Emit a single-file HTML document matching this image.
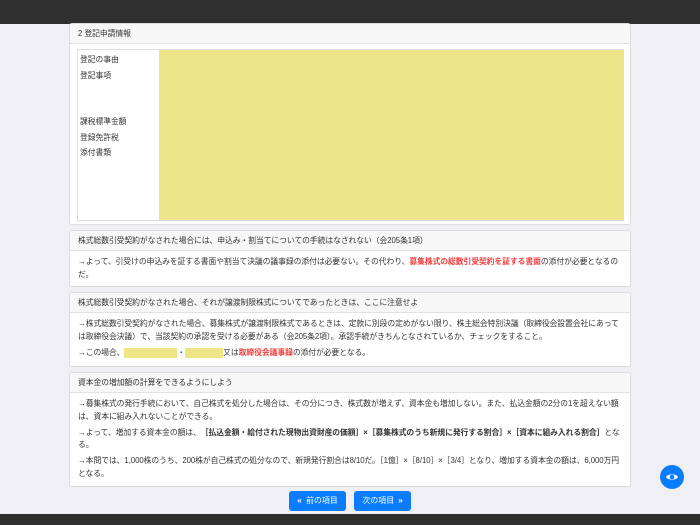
<!DOCTYPE html>
<html><head><meta charset="utf-8"><style>
*{box-sizing:border-box;margin:0;padding:0}
body{width:700px;height:525px;overflow:hidden;background:#efeff4;font-family:"Liberation Sans","Noto Sans CJK JP",sans-serif;font-size:7.8px;letter-spacing:-0.06px;color:#333;position:relative}
.top{position:absolute;left:0;top:0;width:700px;height:24px;background:#2f2f2f}
.bot{position:absolute;left:0;top:514px;width:700px;height:11px;background:#2f2f2f}
.card{position:absolute;left:69px;width:562px;background:#fff;border:1px solid #ddd;border-radius:3px;overflow:hidden}
.hd{background:#f7f7f7;border-bottom:1px solid #e2e2e2;height:20px;line-height:19px;padding-left:8px}
.bd{padding:5px 7px 0 8px;line-height:12.6px}
.bd p{margin-bottom:3.5px}
.r{color:#f03c3c;font-weight:bold}
.y{display:inline-block;background:#ede688;height:10px;vertical-align:middle}
.btn{position:absolute;top:491px;height:20px;background:#0a7cff;color:#fff;border-radius:3px;line-height:20px;text-align:center;font-size:8px}
.eye{position:absolute;left:660px;top:465px;width:24px;height:24px;border-radius:50%;background:#0a7cff}
</style></head><body>
<div class="top"></div>
<div class="card" style="top:23px;height:202px">
<div class="hd">2 登記申請情報</div>
<div style="position:absolute;left:7px;top:25px;width:547px;height:172px;border:1px solid #ddd">
<div style="position:absolute;left:81px;top:0;right:0;bottom:0;background:#ede688"></div>
<div style="position:absolute;left:2px;top:2px;line-height:15.5px">登記の事由<br>登記事項<br><br><br>課税標準金額<br>登録免許税<br>添付書類</div>
</div></div>
<div class="card" style="top:230px;height:57px">
<div class="hd">株式総数引受契約がなされた場合には、申込み・割当てについての手続はなされない（会205条1項）</div>
<div class="bd"><p>→よって、引受けの申込みを証する書面や割当て決議の議事録の添付は必要ない。その代わり、<span class="r">募集株式の総数引受契約を証する書面</span>の添付が必要となるのだ。</p></div></div>
<div class="card" style="top:292px;height:75px">
<div class="hd">株式総数引受契約がなされた場合、それが譲渡制限株式についてであったときは、ここに注意せよ</div>
<div class="bd"><p>→株式総数引受契約がなされた場合、募集株式が譲渡制限株式であるときは、定款に別段の定めがない限り、株主総会特別決議（取締役会設置会社にあっては取締役会決議）で、当該契約の承認を受ける必要がある（会205条2項）。承認手続がきちんとなされているか、チェックをすること。</p>
<p>→この場合、<span class="y" style="width:53px"></span>・<span class="y" style="width:38px"></span>又は<span class="r">取締役会議事録</span>の添付が必要となる。</p></div></div>
<div class="card" style="top:372px;height:115px">
<div class="hd">資本金の増加額の計算をできるようにしよう</div>
<div class="bd"><p>→募集株式の発行手続において、自己株式を処分した場合は、その分につき、株式数が増えず、資本金も増加しない。また、払込金額の2分の1を超えない額は、資本に組み入れないことができる。</p>
<p>→よって、増加する資本金の額は、<b>［払込金額・給付された現物出資財産の価額］×［募集株式のうち新規に発行する割合］×［資本に組み入れる割合］</b>となる。</p>
<p>→本問では、1,000株のうち、200株が自己株式の処分なので、新規発行割合は8/10だ。［1億］×［8/10］×［3/4］となり、増加する資本金の額は、6,000万円となる。</p></div></div>
<div class="btn" style="left:289px;width:57px"><b>«</b>&nbsp; 前の項目</div>
<div class="btn" style="left:354px;width:57px">次の項目 &nbsp;<b>»</b></div>
<div class="eye"><svg width="24" height="24" viewBox="0 0 24 24"><path d="M6 12c2-3.5 10-3.5 12 0c-2 3.5-10 3.5-12 0z" fill="#fff"/><circle cx="12" cy="12" r="2.3" fill="#0a7cff"/></svg></div>
<div class="bot"></div>
</body></html>
